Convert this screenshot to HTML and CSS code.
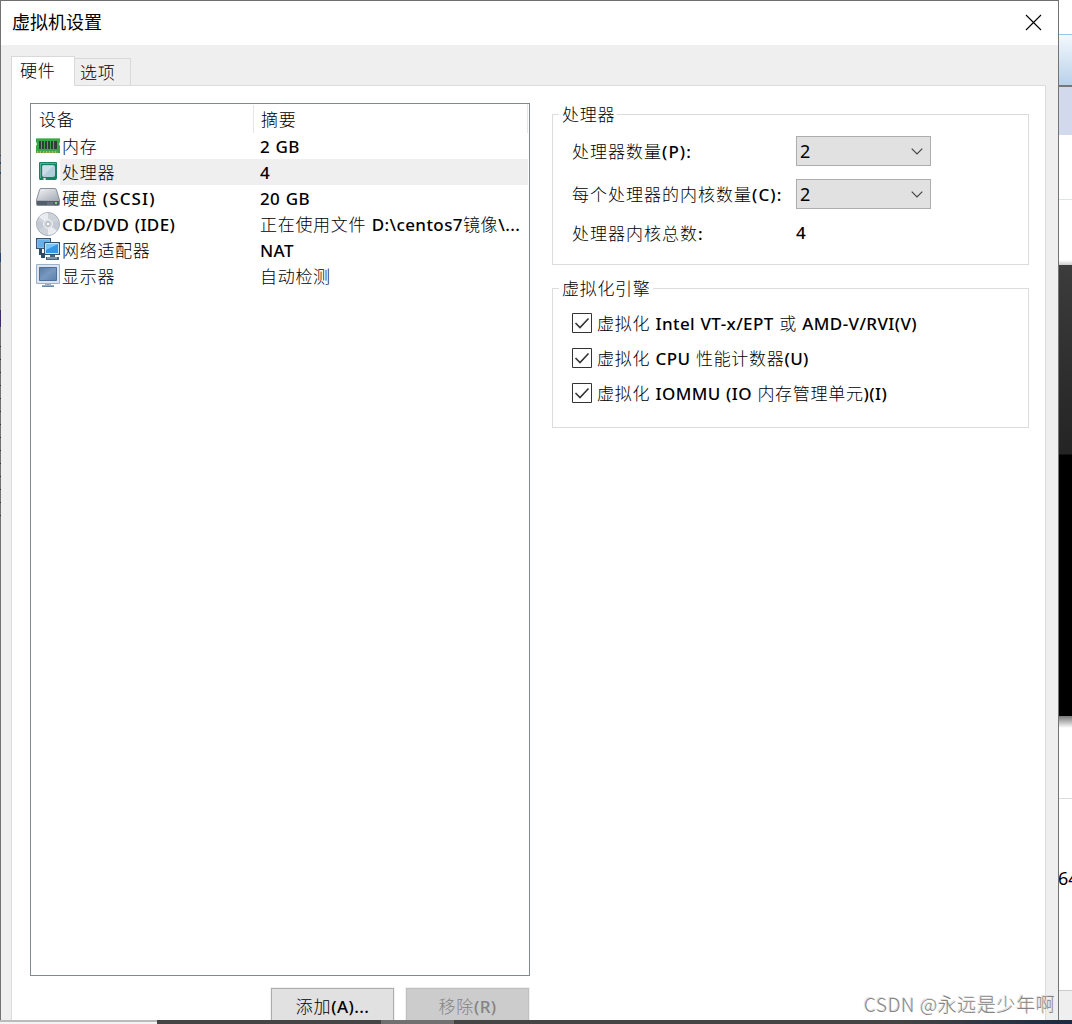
FILE: index.html
```html
<!DOCTYPE html>
<html lang="zh-CN">
<head>
<meta charset="utf-8">
<title>虚拟机设置</title>
<link rel="stylesheet" href="styles.css">
</head>
<body>
<div class="desktop">
  <div class="edge"></div>
  <main class="window">
    <header class="titlebar">
      <h1>虚拟机设置</h1>
      <svg class="close" width="17" height="17" viewBox="0 0 17 17"><path d="M1 1L16 16M16 1L1 16" stroke="#000" stroke-width="1.1"/></svg>
    </header>
    <nav class="tabs"><span class="tab active">硬件</span><span class="tab">选项</span></nav>
    <div class="page">
      <div class="left">
        <div class="list">
          <div class="row head"><span class="dev">设备</span><span class="sum">摘要</span></div>
          <div class="row">
            <svg class="icon" width="24" height="24" viewBox="0 0 24 24"><path d="M0 4h24v4l-1 2 1 2v7H0v-7l1-2-1-2z" fill="#3aa648"/><path d="M0 4h24v1H0z" fill="#83c587"/><path d="M3 7h5v8H3zM9 7h5v8H9zM15 7h6v8h-6z" fill="#343b36"/><path d="M5 7h1v8H5zM11 7h1v8h-1zM17 7h1v8h-1z" fill="#7d857e"/><path d="M1 17h4v2H1zM7 17h15v2H7z" fill="#b8bd63"/><path d="M3 17v2M9 17v2M12 17v2M15 17v2M18 17v2M21 17v2" stroke="#23812f"/></svg>
            <span class="dev">内存</span><span class="sum"><b>2 GB</b></span></div>
          <div class="row selected">
            <svg class="icon" width="24" height="24" viewBox="0 0 24 24"><path d="M3 3q0-1 1-1h16q1 0 1 1v15q0 2-2 2h-9l-1-1-2 1H4q-1 0-1-2z" fill="#178262"/><path d="M4 3h16v1H5v14H4z" fill="#56ad91"/><path d="M7 5h10q2 0 2 2v8q0 2-2 2H8q-2 0-2-2V6z" fill="#b3cddd"/><path d="M7 6h10L7 16z" fill="#cbdfe9"/><path d="M7 18h3l-1 2H8z" fill="#dce9dc"/></svg>
            <span class="dev">处理器</span><span class="sum"><b>4</b></span></div>
          <div class="row">
            <svg class="icon" width="24" height="24" viewBox="0 0 24 24"><defs><linearGradient id="hd" x2="1" y2="1"><stop stop-color="#f2f3f5"/><stop offset="1" stop-color="#a4abb4"/></linearGradient></defs><path d="M5 2h14q1 0 2 2l3 10v4q0 2-2 2H2q-2 0-2-2v-4L3 4q1-2 2-2z" fill="#858e98"/><path d="M5 3h14l1 1 3 10H1l3-10z" fill="url(#hd)"/><path d="M1 14h22v5H1z" fill="#535e6b"/><path d="M1 14.500h22" stroke="#a9b0b8"/><path d="M19 16h2v2h-2z" fill="#7be070"/><path d="M12 16v3M14 16v3M16 16v3" stroke="#7c858e"/></svg>
            <span class="dev">硬盘 <b class="wide">(SCSI)</b></span><span class="sum"><b>20 GB</b></span></div>
          <div class="row">
            <svg class="icon" width="24" height="24" viewBox="0 0 24 24"><circle cx="12" cy="12" r="11.500" fill="#ced3da" stroke="#a7afba"/><path d="M12 12L3 5Q7 1 12 1zM12 12l9 7q-4 4-9 4z" fill="#e9ecf0"/><path d="M12 12L1 9Q0 14 3 18zM12 12l11-3q1 5-2 9z" fill="#bcc4ce" opacity=".6"/><circle cx="12" cy="12" r="4.500" fill="#d3d7dd" stroke="#eff1f3"/><circle cx="12" cy="12" r="2" fill="#fff" stroke="#a6adb7"/></svg>
            <span class="dev"><b>CD/DVD (IDE)</b></span><span class="sum">正在使用文件 <b>D:\centos7</b>镜像<b>\...</b></span></div>
          <div class="row">
            <svg class="icon" width="24" height="24" viewBox="0 0 24 24"><path d="M0 0h15v11H0z" fill="#365773"/><path d="M1.500 1.500h12v8h-12z" fill="#69b0e9" stroke="#8fbcdd"/><path d="M3 11h3v4h3v5h-4v-3H3z" fill="#294c69"/><path d="M8 4h16v13H8z" fill="#345570"/><path d="M9.500 5.500h13v10h-13z" fill="#3498e4" stroke="#c3e3f7"/><path d="M10 6h12l-12 6z" fill="#80c5f2"/><path d="M14 17h5v2h4v3H10v-3h4z" fill="#48657c"/><path d="M11 20h10" stroke="#bacbd7"/></svg>
            <span class="dev">网络适配器</span><span class="sum"><b>NAT</b></span></div>
          <div class="row">
            <svg class="icon" width="24" height="24" viewBox="0 0 24 24"><defs><linearGradient id="mon" x2="1" y2="1"><stop stop-color="#587ca9"/><stop offset=".5" stop-color="#7899bf"/><stop offset="1" stop-color="#5c80ad"/></linearGradient></defs><path d="M.5.5h23v19H.5z" fill="#dbe4ef" stroke="#9db1cc"/><path d="M3.500 3.500h17v13h-17z" fill="url(#mon)" stroke="#506f98"/><path d="M9 20h6v1h3v2H6v-2h3z" fill="#9bafc8"/><path d="M6 22.500h12" stroke="#6885aa"/></svg>
            <span class="dev">显示器</span><span class="sum">自动检测</span></div>
        </div>
        <div class="buttons"><span class="btn">添加<b>(A)...</b></span><span class="btn disabled">移除<b>(R)</b></span></div>
      </div>
      <div class="right">
        <section class="group cpu">
          <h2>处理器</h2>
          <div class="field"><label>处理器数量<b class="wide">(P):</b></label><span class="select">2<svg width="12" height="7" viewBox="0 0 12 7"><path d="M.7.7L6 6 11.300.7" fill="none" stroke="#444" stroke-width="1.200"/></svg></span></div>
          <div class="field"><label>每个处理器的内核数量<b class="wide">(C):</b></label><span class="select">2<svg width="12" height="7" viewBox="0 0 12 7"><path d="M.7.7L6 6 11.300.7" fill="none" stroke="#444" stroke-width="1.200"/></svg></span></div>
          <div class="field"><label>处理器内核总数<b>:</b></label><b>4</b></div>
        </section>
        <section class="group engine">
          <h2>虚拟化引擎</h2>
          <div class="check"><svg width="20" height="20" viewBox="0 0 20 20"><path d="M.5.5h19v19H.5z" fill="#fff" stroke="#333"/><path d="M3.500 10l4.500 4.500L16.500 5.500" fill="none" stroke="#333" stroke-width="1.600"/></svg><span>虚拟化 <b>Intel VT-x/EPT</b> 或 <b>AMD-V/RVI(V)</b></span></div>
          <div class="check"><svg width="20" height="20" viewBox="0 0 20 20"><path d="M.5.5h19v19H.5z" fill="#fff" stroke="#333"/><path d="M3.500 10l4.500 4.500L16.500 5.500" fill="none" stroke="#333" stroke-width="1.600"/></svg><span>虚拟化 <b>CPU</b> 性能计数器<b>(U)</b></span></div>
          <div class="check"><svg width="20" height="20" viewBox="0 0 20 20"><path d="M.5.5h19v19H.5z" fill="#fff" stroke="#333"/><path d="M3.500 10l4.500 4.500L16.500 5.500" fill="none" stroke="#333" stroke-width="1.600"/></svg><span>虚拟化 <b>IOMMU (IO</b> 内存管理单元<b>)(I)</b></span></div>
        </section>
      </div>
    </div>
  </main>
  <aside class="behind">
    <div class="toolbar"></div><div class="tabstrip"></div><div class="pane"></div><div class="screen"></div><div class="shade"></div><div class="info">64</div><div class="status"></div>
  </aside>
</div>
<footer class="taskbar"><span class="search"></span><span class="running"></span></footer>
<div class="watermark">CSDN @永远是少年啊</div>
</body>
</html>
```
FILE: styles.css
```css
* { box-sizing: border-box; }
body {
  margin: 0; width: 1072px; height: 1024px; overflow: hidden; background: #fff; color: #000;
  font: 300 17px/26px "Noto Sans CJK SC", sans-serif; letter-spacing: .7px; word-spacing: 1px; white-space: nowrap;
}
h1, h2 { margin: 0; font: inherit; }
svg { display: block; flex: none; }
b { font-family: "Noto Sans", sans-serif; font-weight: 500; letter-spacing: .4px; word-spacing: .6px; }
b.wide { letter-spacing: 1.1px; }
.desktop { display: flex; height: 1020px; overflow: hidden; }
.edge {
  width: 1px;
  background: repeating-linear-gradient(transparent 0 6px, #333 6px 7px, transparent 7px 13px) 0 340px / 1px 180px no-repeat,
    linear-gradient(#737373 155px, #26466e 155px 156px, #737373 156px 162px, #26466e 162px 164px, #737373 164px 172px, #26466e 172px 174px, #737373 174px 253px, #26466e 253px 262px, #737373 262px 310px, #412c69 310px 327px, #737373 327px);
}
.window { width: 1058px; display: flex; flex-direction: column; background: #efefef; border-top: 1px solid #6e6e6e; border-right: 1px solid #737373; }
.titlebar { height: 44px; flex: none; background: #fff; display: flex; justify-content: space-between; padding: 8px 16px 0 11px; font-size: 18px; font-weight: 400; letter-spacing: 0; }
.titlebar h1 { margin-top: -1px; }
.close { margin-top: 5px; }
.tabs { height: 41px; flex: none; display: flex; align-items: flex-end; padding-left: 10px; position: relative; z-index: 1; }
.tab { height: 28px; width: 56px; border: 1px solid #d9d9d9; border-left: 0; padding: 0 0 0 5px; }
.tab.active { width: 64px; height: 30px; border-left: 1px solid #d9d9d9; border-bottom: 0; background: #fff; padding-left: 8px; }
.page { flex: 1; margin: -1px 12px 0 10px; border: 1px solid #dcdcdc; border-bottom: 0; background: #fff; display: flex; gap: 22px; padding: 17px 16px 0 18px; min-height: 0; }
.left { width: 500px; }
.list { height: 873px; border: 1px solid #828790; padding-right: 1px; }
.row { display: flex; height: 26px; padding-left: 5px; }
.row .dev { width: 197px; padding-left: 2px; }
.row .sum { flex: 1; padding-left: 3px; }
.row.head { height: 29px; padding: 1px 0 0 8px; border-right: 1px solid #e5e5e5; }
.row.head .dev { width: 215px; height: 28px; padding: 1px 0; border-right: 1px solid #e5e5e5; }
.row.head .sum { padding: 1px 0 0 7px; }
.icon { margin-top: 1px; }
.selected { background: linear-gradient(90deg, #fff 29px, #efefef 29px); }
.buttons { display: flex; justify-content: flex-end; gap: 12px; padding: 12px 1px 0 0; }
.btn { width: 123px; height: 40px; border: 1px solid #adadad; background: #e1e1e1; text-align: center; padding-top: 4px; box-shadow: 0 0 0 1px #f1f1f1; }
.disabled { background: #ccc; border-color: #bfbfbf; color: #838383; }
.right { width: 477px; padding-top: 11px; }
.group { border: 1px solid #dcdcdc; padding-left: 19px; }
.group h2 { width: max-content; height: 26px; margin: -14px 0 0 -13px; padding: 0 2px 0 3px; background: #fff; }
.cpu { height: 151px; margin-bottom: 23px; }
.engine { height: 140px; }
.field { display: flex; height: 30px; align-items: center; margin-top: 13px; letter-spacing: 1px; }
.field:nth-child(2) { margin-top: 9px; }
.field:nth-child(4) { margin-top: 9px; }
.field label { width: 224px; }
.select { display: flex; align-items: center; justify-content: space-between; width: 135px; height: 30px; padding: 0 7px 0 3px; border: 1px solid #adadad; background: #e1e1e1; font-size: 18px; font-family: "Noto Sans", sans-serif; font-weight: 400; }
.check { display: flex; align-items: center; height: 35px; gap: 5px; }
.check span { padding-top: 1px; }
.engine h2 + .check { margin-top: 4px; }
.behind { width: 13px; overflow: hidden; display: flex; flex-direction: column; }
.behind div { flex: none; }
.toolbar { margin-top: 34px; height: 53px; border-top: 1px solid #99c5e9; border-bottom: 2px solid #777; background: linear-gradient(#f3f8fd, #b9d1ea); }
.tabstrip { height: 48px; background: #d3d9ed; }
.pane { height: 130px; background: linear-gradient(#fff 64px, #d5e6f5 64px 65px, #fff 65px 125px, #ccc); }
.screen { height: 451px; background: linear-gradient(#3c3c3c, #242424 189px, #000 190px); }
.shade { height: 12px; background: linear-gradient(#777, #fff); }
.info { margin-top: 70px; border-top: 1px solid #ddd; height: 192px; padding-top: 66px; margin-left: -1px; font-size: 18px; font-family: "Noto Sans", sans-serif; font-weight: 400; letter-spacing: 0; }
.status { flex: 1; height: 30px; border-top: 1px solid #ccc; background: #efefef; }
.taskbar { display: flex; height: 4px; background: linear-gradient(90deg, #454545 900px, #1b2a42); }
.search { width: 157px; background: #f3f3f3; border-top: 2px solid #bbb; }
.running { width: 73px; margin-left: 224px; background: #707070; }
.watermark { position: absolute; left: 864px; top: 990px; font: 300 19px/28px "Noto Sans CJK SC", sans-serif; letter-spacing: .6px; word-spacing: 0; color: #858585; text-shadow: -1px -1px 0 #ddd; }
```
